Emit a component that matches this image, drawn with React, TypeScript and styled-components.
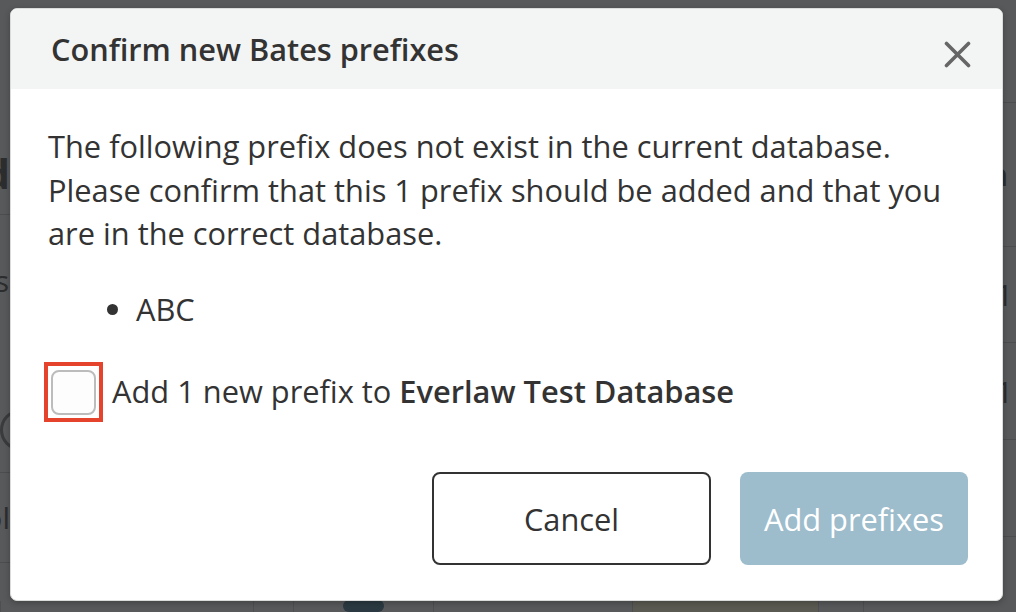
import React from "react";
import styled, { createGlobalStyle } from "styled-components";

const GlobalStyle = createGlobalStyle`
  html, body { margin: 0; padding: 0; }
  body {
    width: 1016px;
    height: 612px;
    overflow: hidden;
    font-family: "Open Sans", "Noto Sans", "Liberation Sans", sans-serif;
    background: #58595a;
  }
  * { box-sizing: border-box; }
`;

const Page = styled.div`
  position: relative;
  width: 1016px;
  height: 612px;
  overflow: hidden;
  background: #58595a;
  color: #2c2d2e;
  display: grid;
  grid-template-rows: 40px 1fr 40px;
`;

const PageHeading = styled.div`
  display: flex;
  padding-left: 516px;
  padding-top: 3px;
  font-size: 42px;
  font-weight: 700;
  line-height: 44px;
  white-space: nowrap;
  color: #2c2d2e;
`;

const PageMiddle = styled.div`
  display: grid;
  grid-template-columns: 140px 1fr 150px;
  margin-top: -40px;
`;

const Rail = styled.div`
  display: flex;
  flex-direction: column;
`;

const RailRow = styled.div<{
  $h: number;
  $line?: boolean;
  $size?: number;
  $bold?: boolean;
  $pad?: number;
  $top?: number;
}>`
  height: ${(p) => p.$h}px;
  display: flex;
  align-items: ${(p) => (p.$top !== undefined ? "flex-start" : "center")};
  padding-top: ${(p) => p.$top ?? 0}px;
  justify-content: flex-end;
  padding-right: ${(p) => p.$pad ?? 0}px;
  overflow: hidden;
  white-space: nowrap;
  font-size: ${(p) => p.$size ?? 30}px;
  font-weight: ${(p) => (p.$bold ? 700 : 400)};
  border-bottom: ${(p) => (p.$line ? "1px solid #4c4d4e" : "none")};
`;

const InfoCircle = styled.span`
  display: inline-flex;
  align-items: center;
  justify-content: center;
  width: 40px;
  height: 40px;
  border: 3px solid #3a3b3c;
  border-radius: 50%;
  font-size: 26px;
  font-weight: 700;
  margin-right: -30px;
`;

const PageFooter = styled.div`
  display: flex;
  align-items: flex-start;
  padding-top: 29px;
`;

const FooterCell = styled.div<{ $w: number; $tone?: string }>`
  width: ${(p) => p.$w}px;
  height: 11px;
  border-left: 1px solid #4e4f50;
  background: ${(p) => p.$tone ?? "transparent"};
  display: flex;
  justify-content: center;
`;

const TealChip = styled.div`
  width: 41px;
  height: 12px;
  border-radius: 6px;
  background: #2b3a42;
  margin-top: -1px;
`;

const Overlay = styled.div`
  position: absolute;
  inset: 0;
  padding: 8px 13px 11px 10px;
  display: flex;
  align-items: flex-start;
`;

const Modal = styled.div`
  width: 993px;
  height: 593px;
  background: #ffffff;
  border: 1px solid #d9dcdb;
  border-radius: 7px;
  overflow: hidden;
  display: flex;
  flex-direction: column;
  box-shadow: 0 2px 6px rgba(0, 0, 0, 0.25);
`;

const Header = styled.div`
  height: 80px;
  flex: none;
  background: #f3f5f4;
  display: flex;
  align-items: center;
  justify-content: space-between;
  padding: 0 31px 0 40px;
`;

const Title = styled.h2`
  margin: 0;
  font-size: 30.7px;
  font-weight: 600;
  color: #333333;
`;

const CloseButton = styled.button`
  width: 28px;
  height: 28px;
  margin-top: 10px;
  padding: 0;
  border: none;
  background: transparent;
  display: flex;
  align-items: center;
  justify-content: center;
  cursor: pointer;
`;

const Body = styled.div`
  padding: 36px 37px 0;
  font-size: 30.8px;
  line-height: 43.5px;
  color: #333333;
`;

const Paragraph = styled.p`
  margin: 0;
`;

const PrefixList = styled.ul`
  margin: 32px 0 0;
  padding-left: 88px;
`;

const CheckRow = styled.label`
  margin-top: 31px;
  margin-left: -4px;
  display: flex;
  align-items: center;
  gap: 9px;
`;

const Highlight = styled.span`
  width: 59px;
  height: 60px;
  border: 4px solid #e5432c;
  display: flex;
  align-items: center;
  justify-content: center;
`;

const CheckBox = styled.span`
  width: 45px;
  height: 45px;
  border: 2px solid #bcbcbc;
  border-radius: 8px;
  background: #fdfdfd;
`;

const Strong = styled.strong`
  font-weight: 600;
`;

const Footer = styled.div`
  margin-top: auto;
  padding: 0 34px 35px;
  display: flex;
  justify-content: flex-end;
  gap: 29px;
`;

const Button = styled.button<{ $primary?: boolean; $w: number }>`
  width: ${(p) => p.$w}px;
  height: 93px;
  border-radius: 8px;
  font-family: inherit;
  font-size: 30.8px;
  font-weight: 400;
  cursor: pointer;
  border: ${(p) => (p.$primary ? "none" : "2px solid #333333")};
  background: ${(p) => (p.$primary ? "#9dbccc" : "#ffffff")};
  color: ${(p) => (p.$primary ? "#ffffff" : "#333333")};
`;

export default function App() {
  return (
    <>
      <GlobalStyle />
      <Page>
        <PageHeading>Selecting fields</PageHeading>
        <PageMiddle>
          <Rail>
            <RailRow $h={130} />
            <RailRow $h={85} $line $bold $size={42} $pad={130}>
              Field
            </RailRow>
            <RailRow $h={130} $pad={131}>
              Fields
            </RailRow>
            <RailRow $h={128} $line $pad={132} $top={65}>
              <InfoCircle>i</InfoCircle>
            </RailRow>
            <RailRow $h={90} $line $pad={130}>
              Tool
            </RailRow>
          </Rail>
          <div />
          <Rail>
            <RailRow $h={103} $line />
            <RailRow $h={144} $line $bold $pad={8}>
              Action
            </RailRow>
            <RailRow $h={96} $line $pad={3}>
              1
            </RailRow>
            <RailRow $h={97} $line $pad={3}>
              1
            </RailRow>
            <RailRow $h={97} $line />
          </Rail>
        </PageMiddle>
        <PageFooter>
          <FooterCell $w={253} />
          <FooterCell $w={40} />
          <FooterCell $w={140}>
            <TealChip />
          </FooterCell>
          <FooterCell $w={199} />
          <FooterCell $w={186} $tone="#5b5a52" />
          <FooterCell $w={45} />
          <FooterCell $w={153} />
        </PageFooter>

        <Overlay>
          <Modal role="dialog" aria-labelledby="dlg-title">
            <Header>
              <Title id="dlg-title">Confirm new Bates prefixes</Title>
              <CloseButton aria-label="Close">
                <svg width="27" height="27" viewBox="0 0 27 27">
                  <path
                    d="M2.5 2.5 L24.5 24.5 M24.5 2.5 L2.5 24.5"
                    stroke="#666666"
                    strokeWidth="3.6"
                    strokeLinecap="round"
                  />
                </svg>
              </CloseButton>
            </Header>
            <Body>
              <Paragraph>
                The following prefix does not exist in the current database.
                Please confirm that this 1 prefix should be added and that you
                are in the correct database.
              </Paragraph>
              <PrefixList>
                <li>ABC</li>
              </PrefixList>
              <CheckRow>
                <Highlight>
                  <CheckBox />
                </Highlight>
                <span>
                  Add 1 new prefix to <Strong>Everlaw Test Database</Strong>
                </span>
              </CheckRow>
            </Body>
            <Footer>
              <Button $w={279}>Cancel</Button>
              <Button $w={228} $primary>
                Add prefixes
              </Button>
            </Footer>
          </Modal>
        </Overlay>
      </Page>
    </>
  );
}
